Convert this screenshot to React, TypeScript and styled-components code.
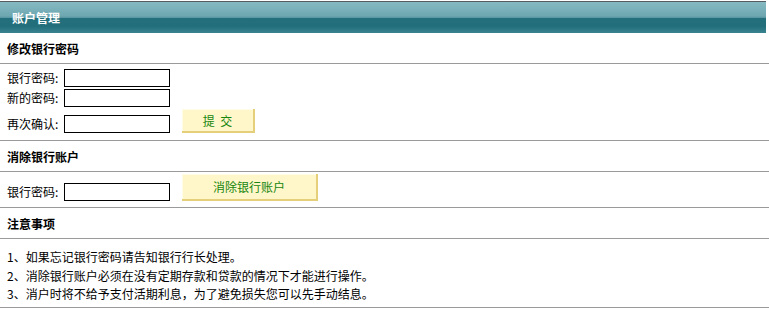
import styled, { createGlobalStyle } from 'styled-components';

const GlobalStyle = createGlobalStyle`
  html, body {
    margin: 0;
    padding: 0;
    background: #ffffff;
  }
  body {
    font-family: "Noto Sans CJK SC", "Liberation Sans", sans-serif;
    font-size: 12px;
    color: #000;
  }
`;

const Page = styled.div`
  width: 769px;
  padding-top: 1px;
`;

const HeaderBar = styled.div`
  height: 31px;
  margin-right: 3px;
  border-top: 1px solid #555d60;
  background: linear-gradient(
    to bottom,
    #86bac2 0%,
    #6ea7b1 45%,
    #5a98a3 50%,
    #236f7c 53%,
    #226e7b 78%,
    #3a8390 100%
  );
  display: flex;
  align-items: center;
  padding-left: 12px;
  color: #ffffff;
  font-weight: 700;
  font-size: 12px;
`;

const SectionTitle = styled.div`
  height: 30px;
  display: flex;
  align-items: center;
  padding-left: 7px;
  font-weight: 700;
  border-bottom: 1px solid #9a9a9a;
`;

const Block = styled.div<{ $top: number; $bottom: number }>`
  display: flex;
  flex-direction: column;
  gap: 2px;
  padding: ${p => p.$top}px 0 ${p => p.$bottom}px 7px;
  border-bottom: 1px solid #9a9a9a;
`;

const Row = styled.div`
  display: flex;
  align-items: flex-end;
`;

const Label = styled.label`
  width: 57px;
  height: 18px;
  line-height: 18px;
  white-space: nowrap;
`;

const TextInput = styled.input`
  box-sizing: border-box;
  width: 106px;
  height: 18px;
  margin: 0;
  padding: 0 2px;
  border: 1px solid #000;
  font-size: 12px;
  background: #fff;
`;

const Button = styled.button<{ $w: number; $h: number }>`
  box-sizing: border-box;
  width: ${p => p.$w}px;
  height: ${p => p.$h}px;
  margin: 0 0 0 12px;
  padding: 0;
  background: #fff7c9;
  border: none;
  border-right: 2px solid #e6cf7a;
  border-bottom: 2px solid #e6cf7a;
  box-shadow: inset 1px 1px 0 #fffce8;
  color: #16860e;
  font-family: "Noto Sans CJK SC", "Liberation Sans", sans-serif;
  font-size: 12px;
  cursor: pointer;
`;

const Notes = styled.div`
  padding: 9px 0 3px 7px;
  line-height: 18.5px;
  border-bottom: 1px solid #9a9a9a;
`;

const notes = [
  '1、如果忘记银行密码请告知银行行长处理。',
  '2、消除银行账户必须在没有定期存款和贷款的情况下才能进行操作。',
  '3、消户时将不给予支付活期利息，为了避免损失您可以先手动结息。',
];

export default function App() {
  return (
    <Page>
      <GlobalStyle />
      <HeaderBar>账户管理</HeaderBar>

      <SectionTitle>修改银行密码</SectionTitle>
      <Block $top={5} $bottom={7}>
        <Row>
          <Label>银行密码:</Label>
          <TextInput type="password" />
        </Row>
        <Row>
          <Label>新的密码:</Label>
          <TextInput type="password" />
        </Row>
        <Row>
          <Label>再次确认:</Label>
          <TextInput type="password" />
          <Button $w={73} $h={24}>提&nbsp;&nbsp;交</Button>
        </Row>
      </Block>

      <SectionTitle>消除银行账户</SectionTitle>
      <Block $top={2} $bottom={6}>
        <Row>
          <Label>银行密码:</Label>
          <TextInput type="password" />
          <Button $w={136} $h={27}>消除银行账户</Button>
        </Row>
      </Block>

      <SectionTitle>注意事项</SectionTitle>
      <Notes>
        {notes.map(n => (
          <div key={n}>{n}</div>
        ))}
      </Notes>
    </Page>
  );
}
